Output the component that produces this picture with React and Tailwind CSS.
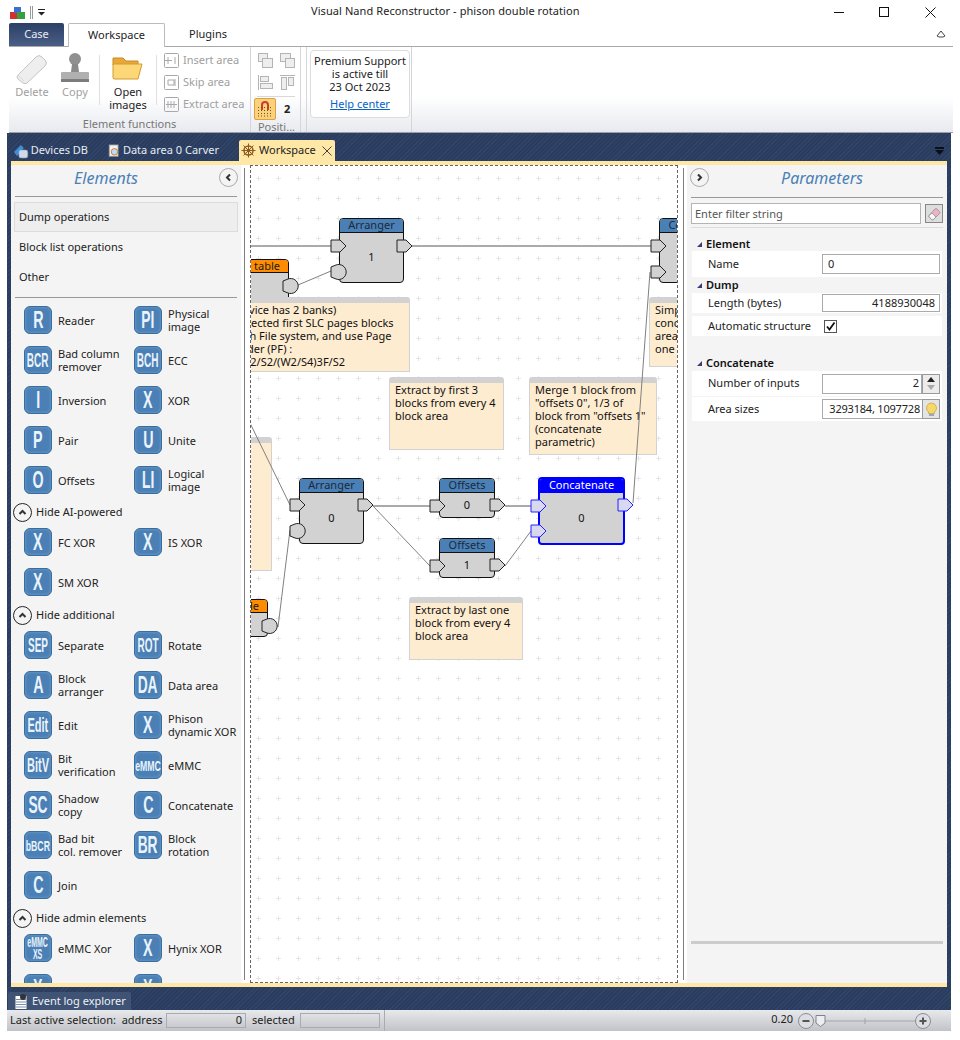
import React from "react";

const NAVY = "bg-[repeating-linear-gradient(135deg,#2b3d5e_0px,#2b3d5e_2px,#31446a_2px,#31446a_3px)]";

function ElIcon({ t, v = "one" }) {
  const cls = {
    one: "text-[23px] scale-x-[0.62]",
    two: "text-[23px] scale-x-[0.6]",
    three: "text-[20px] scale-x-[0.5]",
    edit: "text-[20px] scale-x-[0.55]",
    small: "text-[15px] scale-x-[0.58]",
    emmc: "text-[14px] scale-x-[0.5]",
  }[v];
  return (
    <div className="w-7 h-7 shrink-0 rounded-[6px] border border-[#3a6c9e] bg-[#4a80b5] shadow-[inset_0_0_3px_#76a5d2] flex items-center justify-center overflow-hidden">
      <span className={`font-['Liberation_Sans',sans-serif] font-bold text-[#eaf3fb] leading-none whitespace-nowrap ${cls}`}>{t}</span>
    </div>
  );
}

function ElItem({ t, v, label }) {
  return (
    <div className="flex items-center h-7 gap-[6px]">
      <ElIcon t={t} v={v} />
      <div className="text-[11px] leading-[13px] text-[#222] whitespace-pre">{label}</div>
    </div>
  );
}

function Grid({ children }) {
  return <div className="grid grid-cols-[110px_110px] gap-y-3 pl-[13px] shrink-0">{children}</div>;
}

function Chev({ up, right, left, cls = "" }) {
  return (
    <div className={`w-[19px] h-[19px] rounded-full flex items-center justify-center bg-[#f4f4f4] ${cls}`}>
      <svg width="9" height="9" viewBox="0 0 9 9" fill="none" stroke="#333" strokeWidth="2">
        {up && <path d="M1.5 6 L4.5 3 L7.5 6" />}
        {right && <path d="M3 1.5 L6 4.5 L3 7.5" />}
        {left && <path d="M6 1.5 L3 4.5 L6 7.5" />}
      </svg>
    </div>
  );
}

function Hide({ label, cls }) {
  return (
    <div className={`flex items-center h-[18px] shrink-0 pl-[2px] gap-1 ${cls}`}>
      <Chev up cls="border border-[#222]" />
      <span className="text-[11px] text-[#222]">{label}</span>
    </div>
  );
}

function LeftPanel() {
  return (
    <div className="w-[230px] shrink-0 bg-[#f4f4f4] overflow-hidden flex flex-col">
      <div className="h-[32px] shrink-0 relative flex items-center justify-center pr-[40px] border-b border-[#999] mx-[4px]">
        <span className="text-[16px] italic text-[#4a80b5] pb-[5px]">Elements</span>
        <Chev left cls="absolute right-[-1px] top-[3px] border border-[#aaa]" />
      </div>
      <div className="mx-[3px] mt-[5px] h-[30px] shrink-0 flex items-center pl-[4px] bg-[#eeeeee] border border-[#dcdcdc] text-[11px] text-[#222]">Dump operations</div>
      <div className="mx-[3px] h-[30px] shrink-0 flex items-center pl-[5px] text-[11px] text-[#222]">Block list operations</div>
      <div className="mx-[3px] h-[30px] shrink-0 flex items-center pl-[5px] text-[11px] text-[#222]">Other</div>
      <div className="mx-[4px] mt-[5px] mb-[8px] h-px shrink-0 bg-[#999]" />
      <Grid>
        <ElItem t="R" label="Reader" />
        <ElItem t="PI" v="two" label={"Physical\nimage"} />
        <ElItem t="BCR" v="three" label={"Bad column\nremover"} />
        <ElItem t="BCH" v="three" label="ECC" />
        <ElItem t="I" label="Inversion" />
        <ElItem t="X" label="XOR" />
        <ElItem t="P" label="Pair" />
        <ElItem t="U" label="Unite" />
        <ElItem t="O" label="Offsets" />
        <ElItem t="LI" v="two" label={"Logical\nimage"} />
      </Grid>
      <Hide label="Hide AI-powered" cls="mt-[9px] mb-[7px]" />
      <Grid>
        <ElItem t="X" label="FC XOR" />
        <ElItem t="X" label="IS XOR" />
        <ElItem t="X" label="SM XOR" />
      </Grid>
      <Hide label="Hide additional" cls="mt-[10px] mb-[7px]" />
      <Grid>
        <ElItem t="SEP" v="three" label="Separate" />
        <ElItem t="ROT" v="three" label="Rotate" />
        <ElItem t="A" label={"Block\narranger"} />
        <ElItem t="DA" v="two" label="Data area" />
        <ElItem t="Edit" v="edit" label="Edit" />
        <ElItem t="X" label={"Phison\ndynamic XOR"} />
        <ElItem t="BitV" v="edit" label={"Bit\nverification"} />
        <ElItem t="eMMC" v="small" label="eMMC" />
        <ElItem t="SC" v="two" label={"Shadow\ncopy"} />
        <ElItem t="C" label="Concatenate" />
        <ElItem t="bBCR" v="small" label={"Bad bit\ncol. remover"} />
        <ElItem t="BR" v="two" label={"Block\nrotation"} />
        <ElItem t="C" label="Join" />
      </Grid>
      <Hide label="Hide admin elements" cls="mt-[10px] mb-[7px]" />
      <Grid>
        <ElItem t={<span className="block text-center leading-[12px]">eMMC<br />XS</span>} v="emmc" label="eMMC Xor" />
        <ElItem t="X" label="Hynix XOR" />
        <ElItem t="X" label="" />
        <ElItem t="X" label="" />
      </Grid>
    </div>
  );
}

function Node({ cls, title, num, head = "bg-[#4a80b5] text-[#1c2a3a]", hcls = "h-[14px] justify-center", sel }) {
  return (
    <div className={`absolute rounded-[4px] overflow-hidden flex flex-col bg-[#d2d2d2] ${sel ? "border-2 border-[#0000ff]" : "border border-[#111]"} ${cls}`}>
      <div className={`shrink-0 flex items-center text-[11px] whitespace-nowrap border-b ${sel ? "border-[#0000ff]" : "border-[#111]"} ${head} ${hcls}`}>{title}</div>
      <div className="flex-1 flex items-center justify-center text-[11px] text-[#111]">{num}</div>
    </div>
  );
}

function Note({ cls, inner = "pl-[5px]", children }) {
  return (
    <div className={`absolute bg-[#feecd0] border border-[#d2d2d2] border-t-[6px] rounded-t-[3px] overflow-hidden ${cls}`}>
      <div className={`text-[11px] leading-[13px] text-[#111] whitespace-pre ${inner}`}>{children}</div>
    </div>
  );
}

const pent = (x, cy) => `M${x} ${cy - 6} h9 l6 6 l-6 6 h-9 z`;
const circ = (x, cy) => `M${x} ${cy - 5} L${x + 5} ${cy - 7} A7.5 7.5 0 1 1 ${x + 5} ${cy + 7} L${x} ${cy + 5} Z`;

function Canvas() {
  const ports = [
    [pent, 331, 246], [circ, 331, 272], [pent, 397, 246],
    [circ, 283, 286], [pent, 651, 246], [pent, 651, 272],
    [pent, 290, 505], [circ, 290, 531], [pent, 358, 505],
    [pent, 430, 506], [pent, 490, 505], [pent, 430, 566], [pent, 490, 565],
    [circ, 262, 626],
  ];
  return (
    <div className="w-[428px] shrink-0 relative overflow-hidden bg-white border border-dashed border-[#666]">
      <svg className="absolute -left-px -top-px" width="428" height="818" viewBox="250 165 428 818">
        <defs>
          <pattern id="plusgrid" x="248" y="168" width="20" height="20" patternUnits="userSpaceOnUse">
            <rect x="8" y="10" width="5" height="1" fill="#e6e6e6" />
            <rect x="10" y="8" width="1" height="5" fill="#e6e6e6" />
          </pattern>
        </defs>
        <rect x="250" y="165" width="428" height="818" fill="url(#plusgrid)" />
      </svg>

      <Node cls="-left-[31px] top-[93px] w-[69px] h-[50px]" title="table" head="bg-[#ff8c00] text-[#1a1a1a]" hcls="h-[13px] justify-end pr-[8px]" />
      <Note cls="-left-[31px] top-[131px] w-[190px] h-[75px]" inner="pl-[13px]">{"\u200ADevice has 2 banks)\ndetected first SLC pages blocks\nwith File system, and use Page\nOrder (PF) :\nWS2/S2/(W2/S4)3F/S2"}</Note>
      <Note cls="-left-[101px] top-[271px] w-[122px] h-[134px]" inner="pl-[6px]">{"\n\n\n\n\n\n     X7,"}</Note>
      <Note cls="left-[138px] top-[211px] w-[115px] h-[73px]">{"Extract by first 3\nblocks from every 4\nblock area"}</Note>
      <Note cls="left-[278px] top-[211px] w-[128px] h-[78px]">{'Merge 1 block from\n"offsets 0", 1/3 of\nblock from "offsets 1"\n(concatenate\nparametric)'}</Note>
      <Note cls="left-[158px] top-[431px] w-[114px] h-[63px]">{"Extract by last one\nblock from every 4\nblock area"}</Note>
      <Note cls="left-[398px] top-[131px] w-[100px] h-[70px]">{"Simple\nconcatenate\narea\none"}</Note>

      <Node cls="left-[88px] top-[52px] w-[65px] h-[65px]" title="Arranger" num="1" />
      <Node cls="left-[408px] top-[52px] w-[84px] h-[65px]" title="Concatenate" />
      <Node cls="left-[48px] top-[312px] w-[65px] h-[66px]" title="Arranger" num="0" />
      <Node cls="left-[188px] top-[312px] w-[56px] h-[40px]" title="Offsets" num="0" />
      <Node cls="left-[188px] top-[372px] w-[56px] h-[40px]" title="Offsets" num="1" />
      <Node cls="-left-[61px] top-[433px] w-[78px] h-[38px]" title="de" head="bg-[#ff8c00] text-[#1a1a1a]" hcls="h-[13px] justify-end pr-[8px]" />
      <Node sel cls="left-[287px] top-[311px] w-[87px] h-[68px]" title="Concatenate" head="bg-[#0000ff] text-white" hcls="h-[14px] justify-center" num="0" />

      <svg className="absolute -left-px -top-px" width="428" height="818" viewBox="250 165 428 818" fill="none">
        <g stroke="#aaaaaa" strokeWidth="2">
          <path d="M250 246 H331" />
          <path d="M412 246 H651" />
          <path d="M373 506 H430" />
          <path d="M505 506 H531" />
        </g>
        <g stroke="#808080" strokeWidth="1">
          <path d="M298 285 L331 271" />
          <path d="M650 272 L633 503" />
          <path d="M250 423 L290 505" />
          <path d="M290 530 L278 627" />
          <path d="M373 506 L430 566" />
          <path d="M505 566 L531 531" />
        </g>
        {ports.map(([f, x, cy], i) => (
          <path key={i} d={f(x, cy)} fill="#d2d2d2" stroke="#222" strokeWidth="1" />
        ))}
        <path d={pent(531, 506)} fill="#d8d8f0" stroke="#2222ff" />
        <path d={pent(531, 531)} fill="#d8d8f0" stroke="#2222ff" />
        <path d={pent(618, 505)} fill="#d8d8f0" stroke="#2222ff" />
      </svg>
    </div>
  );
}

function Tri() {
  return (
    <svg width="7" height="7" viewBox="0 0 7 7" className="shrink-0">
      <path d="M1 6 L6 6 L6 1 Z" fill="#3a3a78" />
    </svg>
  );
}

function Sect({ label, cls = "" }) {
  return (
    <div className={`flex items-center shrink-0 gap-[3px] pl-[5px] text-[11px] font-semibold text-[#111] ${cls}`}>
      <Tri />
      <span>{label}</span>
    </div>
  );
}

function Row({ label, cls, children }) {
  return (
    <div className={`mx-[1px] shrink-0 bg-white flex items-center pl-[16px] text-[11px] text-[#222] ${cls}`}>
      <span className="w-[114px] shrink-0">{label}</span>
      {children}
    </div>
  );
}

function RightPanel() {
  return (
    <div className="w-[260px] shrink-0 bg-[#f4f4f4] flex flex-col px-[4px] overflow-hidden">
      <div className="h-[33px] shrink-0 relative flex items-center justify-center pl-[10px] border-b border-[#999]">
        <span className="text-[16px] italic text-[#4a80b5] pb-[7px]">Parameters</span>
        <Chev right cls="absolute -left-[1px] top-[3px] border border-[#aaa]" />
      </div>
      <div className="flex items-center h-[21px] shrink-0 mt-[5px] gap-[4px]">
        <div className="w-[230px] h-[21px] bg-white border border-[#b4b4b4] flex items-center pl-[3px] pt-[1px] text-[11px] text-[#555]">Enter filter string</div>
        <div className="w-[18px] h-[19px] bg-[#ddd] border border-[#888] flex items-center justify-center">
          <svg width="14" height="14" viewBox="0 0 14 14">
            <path d="M1.5 9 L8 2 Q9 1 10 2 L12.5 4.5 Q13.5 5.5 12.5 6.5 L6 13 L4.5 12.5 Z" fill="#f0b0c8" stroke="#888" strokeWidth="0.7" />
            <path d="M1.5 9 L4.5 12.5 L6 13 L9 10 L5 6 Z" fill="#f6f6f6" stroke="#888" strokeWidth="0.7" />
          </svg>
        </div>
      </div>
      <div className="h-px shrink-0 bg-[#dcdcdc] mt-[3px]" />
      <Sect label="Element" cls="h-[15px] mt-[8px] pt-[2px]" />
      <Row label="Name" cls="h-[26px]">
        <div className="w-[118px] h-[20px] bg-white border border-[#aaa] flex items-center pl-[5px] text-[#222]">0</div>
      </Row>
      <Sect label="Dump" cls="h-[16px] pt-[1px]" />
      <Row label="Length (bytes)" cls="h-[20px]">
        <div className="w-[118px] h-[18px] bg-white border border-[#aaa] flex items-center justify-end pr-[4px] text-[#222]">4188930048</div>
      </Row>
      <Row label="Automatic structure" cls="h-[20px] mt-[3px]">
        <div className="ml-[2px] w-[13px] h-[13px] bg-white border border-[#555] flex items-center justify-center">
          <svg width="11" height="11" viewBox="0 0 11 11" fill="none" stroke="#111" strokeWidth="1.8"><path d="M2 5.5 L4.5 8.5 L9.5 1.5" /></svg>
        </div>
      </Row>
      <Sect label="Concatenate" cls="h-[15px] mt-[20px]" />
      <Row label="Number of inputs" cls="h-[25px]">
        <div className="w-[100px] h-[20px] bg-white border border-[#aaa] flex items-center justify-end pr-[2px] text-[#222]">2</div>
        <div className="w-[18px] h-[20px] border border-[#999] bg-[#ececec] flex flex-col items-center justify-center gap-[1px]">
          <svg width="10" height="7" viewBox="0 0 10 7"><path d="M1 6 L5 1 L9 6 Z" fill="#222" /></svg>
          <svg width="10" height="7" viewBox="0 0 10 7"><path d="M1 1 L5 6 L9 1 Z" fill="#aaa" /></svg>
        </div>
      </Row>
      <Row label="Area sizes" cls="h-[24px] mt-[1px]">
        <div className="w-[100px] h-[20px] bg-white border border-r-0 border-[#aaa] flex items-center justify-end pr-[2px] text-[#222] whitespace-nowrap tracking-[-0.2px]">3293184, 1097728</div>
        <div className="w-[18px] h-[20px] border border-[#999] bg-[#e4e4e4] flex items-center justify-center">
          <svg width="13" height="15" viewBox="0 0 13 15">
            <path d="M6.5 1 A5 5 0 0 1 9.5 10 V11.5 H3.5 V10 A5 5 0 0 1 6.5 1 Z" fill="#f6d76a" stroke="#c0a040" strokeWidth="0.7" />
            <rect x="4" y="12" width="5" height="2" fill="#9aa8b8" />
          </svg>
        </div>
      </Row>
      <div className="flex-1" />
      <div className="h-[3px] shrink-0 bg-[#cccccc] mb-[39px]" />
    </div>
  );
}

function GrayTool({ label, d }) {
  return (
    <div className="flex items-center h-[22px] gap-[3px]">
      <svg width="17" height="17" viewBox="0 0 17 17" fill="none" stroke="#a8a8a8"><rect x="1.5" y="1.5" width="14" height="14" rx="1" />{d}</svg>
      <span className="text-[11px] text-[#a0a0a0]">{label}</span>
    </div>
  );
}

function TwoSq({ v }) {
  return (
    <svg width="17" height="17" viewBox="0 0 17 17" fill="#eeeeee" stroke="#b4b4b4">
      {v === 0 && <><rect x="1.5" y="1.5" width="9" height="8" /><rect x="5.5" y="6.5" width="10" height="9" /></>}
      {v === 1 && <><rect x="1.5" y="1.5" width="10" height="8" /><rect x="6.5" y="6.5" width="9" height="9" /></>}
      {v === 2 && <><path d="M1.5 1 V16" /><rect x="3.5" y="2.5" width="8" height="5" /><rect x="3.5" y="9.5" width="12" height="5" /></>}
      {v === 3 && <><path d="M1 1.5 H16" /><rect x="2.5" y="3.5" width="5" height="12" /><rect x="9.5" y="3.5" width="5" height="8" /></>}
    </svg>
  );
}

function Ribbon() {
  return (
    <div className="ml-[9px] w-[944px] h-[86px] shrink-0 flex bg-[linear-gradient(180deg,#ffffff_0%,#ffffff_58%,#e8eaef_100%)] border-b border-[#9aa0a8]">
      <div className="w-[242px] shrink-0 flex flex-col border-r border-[#d4d6da]">
        <div className="flex-1 flex">
          <div className="w-[46px] flex flex-col items-center pt-[7px]">
            <svg width="32" height="30" viewBox="0 0 32 30">
              <path d="M2 21 L20 3 Q23 0 26 3 L29 6 Q32 9 29 12 L11 29 Q9 30 7 29 L2 25 Q0 23 2 21 Z" fill="#eeeeee" stroke="#c4c4c4" />
              <path d="M2 21 L8 27" stroke="#d8d8d8" />
            </svg>
            <span className="text-[11px] text-[#a0a0a0]">Delete</span>
          </div>
          <div className="w-[40px] flex flex-col items-center pt-[5px]">
            <svg width="30" height="32" viewBox="0 0 30 32">
              <circle cx="15" cy="7" r="6" fill="#909090" />
              <path d="M12 12 H18 L19 20 H11 Z" fill="#8a8a8a" />
              <rect x="1" y="20" width="28" height="7" rx="1" fill="#b0b0b0" />
              <rect x="1" y="27" width="28" height="3" fill="#7c7c7c" />
            </svg>
            <span className="text-[11px] text-[#a0a0a0]">Copy</span>
          </div>
          <div className="w-px h-[50px] mt-[8px] ml-[4px] bg-[#e0e0e0]" />
          <div className="w-[56px] flex flex-col items-center pt-[9px]">
            <svg width="32" height="25" viewBox="0 0 32 25">
              <path d="M1 2 H11 L14 5 H26 V9 H1 Z" fill="#e8a838" stroke="#c88a20" />
              <path d="M1 22 V8 H30 L26 23 H2 Z" fill="#fbd777" stroke="#d49a30" />
            </svg>
            <span className="text-[11px] leading-[13px] text-[#222] text-center mt-[4px]">Open<br />images</span>
          </div>
          <div className="w-px h-[50px] mt-[8px] bg-[#e0e0e0]" />
          <div className="flex flex-col ml-[6px] pt-[2px]">
            <GrayTool label="Insert area" d={<path d="M5 5 V12 M12 5 V12 M1 8.5 H9" />} />
            <GrayTool label="Skip area" d={<path d="M5 6 H11 V11 H5 Z M12 5 V12" />} />
            <GrayTool label="Extract area" d={<path d="M3 8.5 H14 M5 5 V12 M8 5 V12 M11 5 V12" />} />
          </div>
        </div>
        <div className="h-[15px] text-center text-[11px] leading-[14px] text-[#777]">Element functions</div>
      </div>
      <div className="w-[50px] shrink-0 flex flex-col border-r border-[#d4d6da]">
        <div className="flex-1 pl-[6px] pt-[5px]">
          <div className="flex gap-[5px] h-[22px]"><TwoSq v={0} /><TwoSq v={1} /></div>
          <div className="flex gap-[5px] h-[22px]"><TwoSq v={2} /><TwoSq v={3} /></div>
          <div className="h-px w-[38px] bg-[#d8d8d8] mb-[1px]" />
          <div className="flex items-center -ml-[3px]">
            <div className="w-[22px] h-[22px] rounded-[2px] bg-[#fbd27c] border border-[#e0a040] flex items-center justify-center">
              <svg width="16" height="16" viewBox="0 0 16 16" fill="none">
                <path d="M5 9 V4 A3 3 0 0 1 11 4 V9" stroke="#c84030" strokeWidth="2" />
                <path d="M1 6.5 H15 M1 9.5 H15 M1 12.5 H15 M1 15 H15" stroke="#705020" strokeWidth="1" strokeDasharray="1 2" />
              </svg>
            </div>
            <span className="ml-[8px] text-[11px] font-bold text-[#222]">2</span>
          </div>
        </div>
        <div className="h-[15px] pl-[2px] text-center text-[11px] leading-[14px] text-[#777]">Positi...</div>
      </div>
      <div className="w-[6px] shrink-0 border-r border-[#d4d6da]" />
      <div className="w-[105px] shrink-0 border-r border-[#d4d6da] pl-[3px] pt-[3px]">
        <div className="w-[100px] h-[68px] bg-white border border-[#dcdcdc] rounded-[4px] flex flex-col items-center pt-[3px] text-[11px] leading-[13px] text-[#222]">
          <span>Premium Support</span>
          <span>is active till</span>
          <span>23 Oct 2023</span>
          <span className="text-[#0563c8] underline mt-[4px]">Help center</span>
        </div>
      </div>
    </div>
  );
}

function DockTab({ icon, label, cls = "" }) {
  return (
    <div className={`flex items-center gap-[2px] text-[11px] text-[#e6ebf2] h-[21px] whitespace-nowrap ${cls}`}>
      {icon}
      <span>{label}</span>
    </div>
  );
}

function Dock() {
  return (
    <div className={`ml-[7px] w-[944px] h-[877px] shrink-0 flex flex-col ${NAVY}`}>
      <div className="h-[28px] shrink-0 relative flex items-end pl-[6px]">
        <DockTab
          cls="w-[75px]"
          label="Devices DB"
          icon={
            <svg width="16" height="16" viewBox="0 0 16 16">
              <path d="M1 9 L8 2 L11 5 L4 13 Z" fill="#3f8ed8" />
              <rect x="6" y="7" width="9" height="8" rx="2" fill="#cfdbe8" stroke="#8aa0b8" strokeWidth="0.6" />
            </svg>
          }
        />
        <DockTab
          cls="ml-[20px] w-[111px]"
          label="Data area 0 Carver"
          icon={
            <svg width="16" height="16" viewBox="0 0 16 16">
              <rect x="1.5" y="0.5" width="11" height="14" fill="#f2f2f2" stroke="#999" />
              <circle cx="8" cy="9" r="4" fill="#bcdcf4" stroke="#d07a30" strokeWidth="1.2" />
            </svg>
          }
        />
        <div className="ml-[20px] w-[96px] h-[21px] rounded-t-[2px] bg-[#ffe8a6] flex items-center pl-[2px] gap-[3px] text-[11px] text-[#222]">
          <svg width="15" height="15" viewBox="0 0 15 15" fill="none" stroke="#8a5a20">
            <circle cx="7.5" cy="7.5" r="4.5" strokeWidth="1.5" />
            <circle cx="7.5" cy="7.5" r="1.5" fill="#c89030" />
            <path d="M7.5 0.5 V14.5 M0.5 7.5 H14.5 M2.5 2.5 L12.5 12.5 M12.5 2.5 L2.5 12.5" strokeWidth="1" />
          </svg>
          <span>Workspace</span>
          <svg className="ml-[3px]" width="10" height="10" viewBox="0 0 10 10" stroke="#444" strokeWidth="1"><path d="M0.5 0.5 L9.5 9.5 M9.5 0.5 L0.5 9.5" /></svg>
        </div>
        <svg className="absolute right-[7px] top-[14px]" width="9" height="8" viewBox="0 0 9 8">
          <rect x="0" y="0" width="9" height="2" fill="#0a0f1a" />
          <path d="M0 3 H9 L4.5 8 Z" fill="#0a0f1a" />
        </svg>
      </div>
      <div className="mx-[4px] h-[4px] shrink-0 bg-[#ffe8a6]" />
      <div className="mx-[4px] h-[818px] shrink-0 bg-white flex">
        <LeftPanel />
        <div className="w-[9px] shrink-0 pl-[3px] py-[3px]"><div className="w-px h-full bg-[#808080]" /></div>
        <Canvas />
        <div className="w-[9px] shrink-0 pl-[5px] py-[3px]"><div className="w-px h-full bg-[#808080]" /></div>
        <RightPanel />
      </div>
      <div className="mx-[4px] h-[4px] shrink-0 bg-[#ffe8a6]" />
      <div className="flex-1 flex items-end pl-[1px]">
        <div className="w-[123px] h-[18px] rounded-t-[2px] bg-[#3f5375] flex items-center pl-[7px] gap-[5px] text-[11px] text-[#eef1f6]">
          <svg width="12" height="15" viewBox="0 0 12 15">
            <rect x="0.5" y="2" width="11" height="13" fill="#ffffff" />
            <path d="M1 5.5 H11 M1 8 H11 M1 10.5 H11 M1 13 H11" stroke="#7a90b0" />
            <circle cx="8" cy="3" r="3" fill="#333" />
          </svg>
          <span>Event log explorer</span>
        </div>
      </div>
    </div>
  );
}

function StatusField({ cls, children }) {
  return <div className={`h-[15px] border border-[#a8acb2] flex items-center justify-end pr-[3px] ${cls}`}>{children}</div>;
}

function Status() {
  return (
    <div className="ml-[7px] w-[944px] h-[21px] shrink-0 flex items-center bg-[linear-gradient(180deg,#e8e9ec_0%,#c0c3c8_100%)] text-[11px] text-[#222] pl-[3px]">
      <span className="w-[156px] whitespace-pre">Last active selection:  address</span>
      <StatusField cls="w-[80px]">0</StatusField>
      <span className="ml-[6px] w-[48px]">selected</span>
      <StatusField cls="w-[80px]" />
      <div className="ml-[4px] w-px h-full bg-[#a8acb2]" />
      <div className="flex-1" />
      <span className="pb-[3px]">0.20</span>
      <div className="ml-[5px] mr-[19px] flex items-center">
        <svg width="134" height="18" viewBox="0 0 134 18" fill="none">
          <path d="M17 9 H118 M67 6 V12" stroke="#a0a4aa" />
          <circle cx="8" cy="9" r="7.5" fill="#dcdee2" stroke="#8a8e94" />
          <path d="M4.5 9 H11.5" stroke="#555" strokeWidth="2" />
          <path d="M18 3.5 H27 V11 L22.5 14.5 L18 11 Z" fill="#eceef0" stroke="#80848a" />
          <circle cx="125" cy="9" r="7.5" fill="#dcdee2" stroke="#8a8e94" />
          <path d="M121.5 9 H128.5 M125 5.5 V12.5" stroke="#555" strokeWidth="2" />
        </svg>
      </div>
    </div>
  );
}

export default function App() {
  return (
    <div className="relative w-[960px] h-[1040px] bg-white overflow-hidden flex flex-col font-['Noto_Sans',sans-serif]">
      <div className="h-[23px] shrink-0 relative flex items-center pl-[311px] text-[11px] tracking-[0.08px] text-[#222]">
        <div className="absolute left-[10px] top-[6px] flex items-center">
          <svg width="15" height="12" viewBox="0 0 15 12">
            <rect x="0" y="5" width="8" height="7" fill="#d43030" />
            <rect x="4" y="0" width="7" height="6" fill="#3a6fd0" />
            <rect x="7" y="5" width="8" height="7" fill="#35a040" />
          </svg>
          <div className="ml-[5px] w-px h-[13px] bg-[#999]" />
          <div className="ml-[1px] w-px h-[13px] bg-[#999]" />
          <svg className="ml-[5px]" width="7" height="7" viewBox="0 0 7 7"><rect x="0" y="0" width="7" height="1" fill="#222" /><path d="M0 3 H7 L3.5 6.5 Z" fill="#222" /></svg>
        </div>
        <span>Visual Nand Reconstructor - phison double rotation</span>
        <svg className="absolute left-[834px] top-[7px]" width="102" height="11" viewBox="0 0 102 11" fill="none" stroke="#111">
          <path d="M0 5.5 H10" />
          <rect x="45.5" y="0.5" width="9" height="9" />
          <path d="M91.5 0.5 L101.5 10.5 M101.5 0.5 L91.5 10.5" />
        </svg>
      </div>
      <div className="ml-[9px] w-[944px] h-[24px] shrink-0 relative flex items-end border-b border-[#a8a8a8]">
        <div className="w-[55px] h-[23px] rounded-t-[2px] bg-[linear-gradient(180deg,#2c3f66_0%,#4a5f86_100%)] flex items-center justify-center text-[11px] text-[#e8ecf3]">Case</div>
        <div className="ml-[4px] w-[97px] h-[24px] -mb-px bg-white border border-b-0 border-[#bbb] rounded-t-[2px] flex items-center justify-center text-[11px] text-[#222]">Workspace</div>
        <div className="w-[86px] h-[23px] flex items-center justify-center text-[11px] text-[#222]">Plugins</div>
        <svg className="absolute right-[7px] top-[6px]" width="10" height="9" viewBox="0 0 10 9" fill="none" stroke="#444"><path d="M1 7 L5 2 L9 7 L7 8 H3 Z" /></svg>
      </div>
      <Ribbon />
      <Dock />
      <Status />
    </div>
  );
}
